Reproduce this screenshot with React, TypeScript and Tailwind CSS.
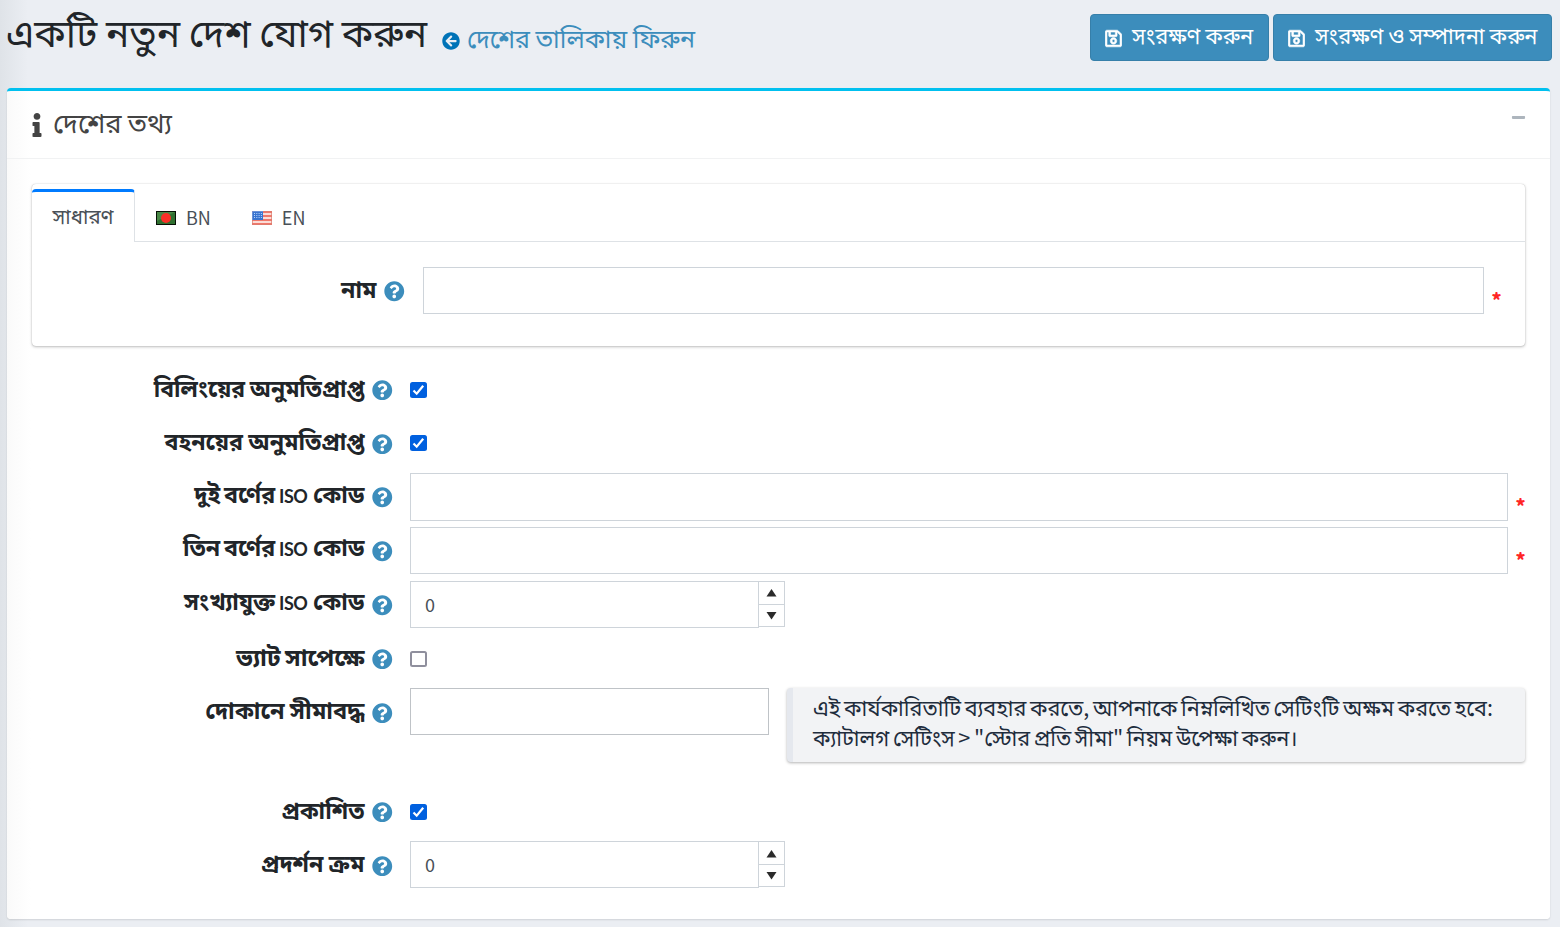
import React from "react";
import { FaArrowCircleLeft, FaInfo, FaMinus, FaQuestionCircle, FaRegSave } from "react-icons/fa";

function HelpLabel({ children, className }: { children: React.ReactNode; className: string }) {
  return (
    <div className={"flex h-[47px] shrink-0 items-center justify-end gap-[7.500px] whitespace-nowrap font-bold leading-[30px] text-[#212529] " + className}>
      <span className="relative -top-[2.500px]">{children}</span>
      <FaQuestionCircle className="relative top-px size-[20.500px] text-[#3c8dbc]" />
    </div>
  );
}

function Row({ label, tall, spacing = "text-[23.2px]", children }: { label: React.ReactNode; tall?: boolean; spacing?: string; children: React.ReactNode }) {
  return (
    <div className={tall ? "flex h-[99.2px]" : "flex h-[53.8px]"}>
      <HelpLabel className={"mr-[17.500px] w-[360.500px] " + spacing}>{label}</HelpLabel>
      {children}
    </div>
  );
}

function Check({ checked = false }: { checked?: boolean }) {
  return (
    <div className="flex h-[48px] items-center">
      <span className={"flex h-4 w-[17px] items-center justify-center rounded-[2.500px] " + (checked ? "bg-[#0060df]" : "border-2 border-[#8f8f9d] bg-white")}>
        {checked && (
          <svg viewBox="0 0 17 16" className="h-4 w-[17px]">
            <path d="M3.500 8.500l3.200 3.200 6.500-8" fill="none" stroke="white" strokeWidth="2.200" />
          </svg>
        )}
      </span>
    </div>
  );
}

function Star() {
  return <span className="ml-[7.500px] w-[10px] shrink-0 pt-[17px] text-[19px] font-black leading-[30px] text-[#ff2525]">*</span>;
}

function Spinner() {
  return (
    <div className="flex">
      <div className="flex h-[47px] w-[349px] items-center border border-[#ced4da] pl-[14px] text-[18px] text-[#495057]">0</div>
      <div className="-ml-px flex h-[46px] w-[27px] flex-col border border-[#ced4da] text-[#2b2b2b]">
        <div className="flex h-[23px] items-center justify-center border-b border-[#ced4da]">
          <svg width="11" height="9" viewBox="0 0 11 9"><path d="M.5 8.500h10L5.500 1z" fill="currentColor" /></svg>
        </div>
        <div className="flex h-[21px] items-center justify-center">
          <svg width="11" height="9" viewBox="0 0 11 9"><path d="M.5 1h10L5.500 8.500z" fill="currentColor" /></svg>
        </div>
      </div>
    </div>
  );
}

const Iso = () => <span className="mr-[2px] font-['Lato',sans-serif] text-[18px] font-bold tracking-[-0.500px]">ISO</span>;

function BangladeshFlag() {
  return (
    <svg width="20" height="14" viewBox="0 0 20 14">
      <rect width="20" height="14" fill="#061006" />
      <rect x="1" y="1" width="18" height="12" fill="#2f7030" />
      <path d="M1 1h18L1 10z" fill="#579553" opacity=".65" />
      <circle cx="10" cy="7" r="5" fill="#f93028" />
    </svg>
  );
}

function UsFlag() {
  return (
    <svg width="20" height="14" viewBox="0 0 20 14">
      <rect width="20" height="14" fill="#fbdcd6" />
      <path d="M0 1h20M0 5h20M0 9h20M0 13h20" stroke="#f0776a" strokeWidth="2" />
      <rect x="1" y="1" width="10" height="8" fill="#3974cf" />
      <path d="M2 2.500h8M2 4.500h8M2 6.500h8" stroke="#b8d3fb" strokeDasharray="1 1.300" />
      <rect x=".5" y=".5" width="19" height="13" fill="none" stroke="#d97e70" opacity=".7" />
      <path d="M.5 9V.5H11" fill="none" stroke="#6a90d6" />
    </svg>
  );
}

export default function App() {
  return (
    <div className="h-[927px] w-[1560px] overflow-hidden bg-[#ebeef3] bg-[linear-gradient(to_right,#dfe3e8_0px,#ebeef3_28px)] font-['Noto_Sans_CJK_SC','Noto_Sans_Bengali',sans-serif] text-[#212529]">
      <header className="flex h-[88px] justify-between pl-[6px] pr-[8px]">
        <div className="flex whitespace-nowrap">
          <h1 className="mt-[8px] h-[44px] w-[421px] text-[38.8px] leading-[44px]">একটি নতুন দেশ যোগ করুন</h1>
          <a className="ml-[15px] mt-[23px] flex h-[32px] items-center gap-[8px] text-[25px] leading-[32px] text-[#3c8dbc]">
            <FaArrowCircleLeft className="relative top-[2px] size-[18px] text-[#0073b7]" />
            <span className="relative -top-[2.500px] -left-px">দেশের তালিকায় ফিরুন</span>
          </a>
        </div>
        <div className="mt-[14px] flex gap-1 whitespace-nowrap text-[21.800px] leading-[30px] text-white [word-spacing:-2px]">
          <button className="flex h-[47px] w-[179px] items-center gap-[10px] rounded border border-[#367fa9] bg-[#3c8dbc] pl-[14px]">
            <FaRegSave className="relative top-[0.500px] h-[19px] w-[17px] shrink-0 stroke-white [stroke-width:16px]" />
            <span className="relative -top-[3px]">সংরক্ষণ করুন</span>
          </button>
          <button className="flex h-[47px] w-[279px] items-center gap-[10px] rounded border border-[#367fa9] bg-[#3c8dbc] pl-[14px]">
            <FaRegSave className="relative top-[0.500px] h-[19px] w-[17px] shrink-0 stroke-white [stroke-width:16px]" />
            <span className="relative -top-[3px]">সংরক্ষণ ও সম্পাদনা করুন</span>
          </button>
        </div>
      </header>
      <main className="ml-[7px] h-[831px] w-[1543px] rounded border-t-[3px] border-[#00c0ef] bg-white bg-[linear-gradient(to_right,#fafafa_0px,#fff_24px)] shadow-[0_1px_2px_rgba(0,0,0,0.12)]">
        <div className="flex h-[68px] justify-between border-b border-[#f1f2f3] pl-[23px] pr-[24px] text-[#444]">
          <div className="flex items-center gap-[10px] whitespace-nowrap text-[27.3px] leading-[32px]">
            <FaInfo className="h-[24px] w-[14px]" />
            <span className="relative -top-[3.500px] -left-px">দেশের তথ্য</span>
          </div>
          <FaMinus className="mt-[19px] size-[15px] text-[#adb5bd]" />
        </div>
        <div className="px-[25px] pt-[25px]">
          <section className="h-[162px] w-[1493px] rounded bg-white shadow-[0_0_1px_rgba(0,0,0,0.25),0_1px_3px_rgba(0,0,0,0.25)]">
            <nav className="flex h-[58px] items-end border-b border-[#dee2e6] text-[#495057]">
              <div className="-mb-px flex h-[53px] w-[103px] items-center justify-center rounded-t border-r border-t-[3px] border-r-[#dee2e6] border-t-[#007bff] bg-white text-[20.500px] leading-[30px]">
                <span className="relative -top-[2px]">সাধারণ</span>
              </div>
              <div className="ml-[21px] flex h-[47px] items-center gap-[10px] text-[18px]">
                <BangladeshFlag />
                <span>BN</span>
              </div>
              <div className="ml-[41px] flex h-[47px] items-center gap-[10px] text-[18px]">
                <UsFlag />
                <span>EN</span>
              </div>
            </nav>
            <div className="flex pt-[25px]">
              <HelpLabel className="mr-[18.500px] w-[372.500px] text-[23.2px]">নাম</HelpLabel>
              <div className="h-[47px] w-[1061px] shrink-0 border border-[#ced4da]" />
              <Star />
            </div>
          </section>
          <div className="pt-[19.600px]">
            <Row label="বিলিংয়ের অনুমতিপ্রাপ্ত" spacing="text-[22.900px] [word-spacing:-0.500px]"><Check checked /></Row>
            <Row label="বহনয়ের অনুমতিপ্রাপ্ত" spacing="text-[23.2px]"><Check checked /></Row>
            <Row label={<>দুই বর্ণের <Iso /> কোড</>} spacing="text-[23.2px] [word-spacing:-1.500px]"><div className="h-[47.500px] w-[1098px] shrink-0 border border-[#ced4da]" /><Star /></Row>
            <Row label={<>তিন বর্ণের <Iso /> কোড</>} spacing="text-[23.2px] [word-spacing:-1.500px]"><div className="h-[47px] w-[1098px] shrink-0 border border-[#ced4da]" /><Star /></Row>
            <Row label={<>সংখ্যাযুক্ত <Iso /> কোড</>} spacing="text-[23.2px] [word-spacing:-1.500px]"><Spinner /></Row>
            <Row label="ভ্যাট সাপেক্ষে" spacing="text-[24.300px] [word-spacing:-1px]"><Check /></Row>
            <Row label="দোকানে সীমাবদ্ধ" tall spacing="text-[23.500px]">
              <div className="h-[47px] w-[359px] shrink-0 border border-[#bfc3c7]" />
              <div className="ml-[18px] h-[74px] w-[738px] shrink-0 whitespace-nowrap rounded border-l-[6px] border-[#e5e8ee] bg-[#f2f3f5] pl-[20px] pt-[4px] text-[21.600px] leading-[30px] text-[#1f2d3d] shadow-[0_1px_3px_rgba(0,0,0,0.3)] [word-spacing:-1.200px]">
                <p>এই কার্যকারিতাটি ব্যবহার করতে, আপনাকে নিম্নলিখিত সেটিংটি অক্ষম করতে হবে:</p>
                <p>ক্যাটালগ সেটিংস &gt; "স্টোর প্রতি সীমা" নিয়ম উপেক্ষা করুন।</p>
              </div>
            </Row>
            <Row label="প্রকাশিত"><Check checked /></Row>
            <Row label="প্রদর্শন ক্রম"><Spinner /></Row>
          </div>
        </div>
      </main>
    </div>
  );
}
